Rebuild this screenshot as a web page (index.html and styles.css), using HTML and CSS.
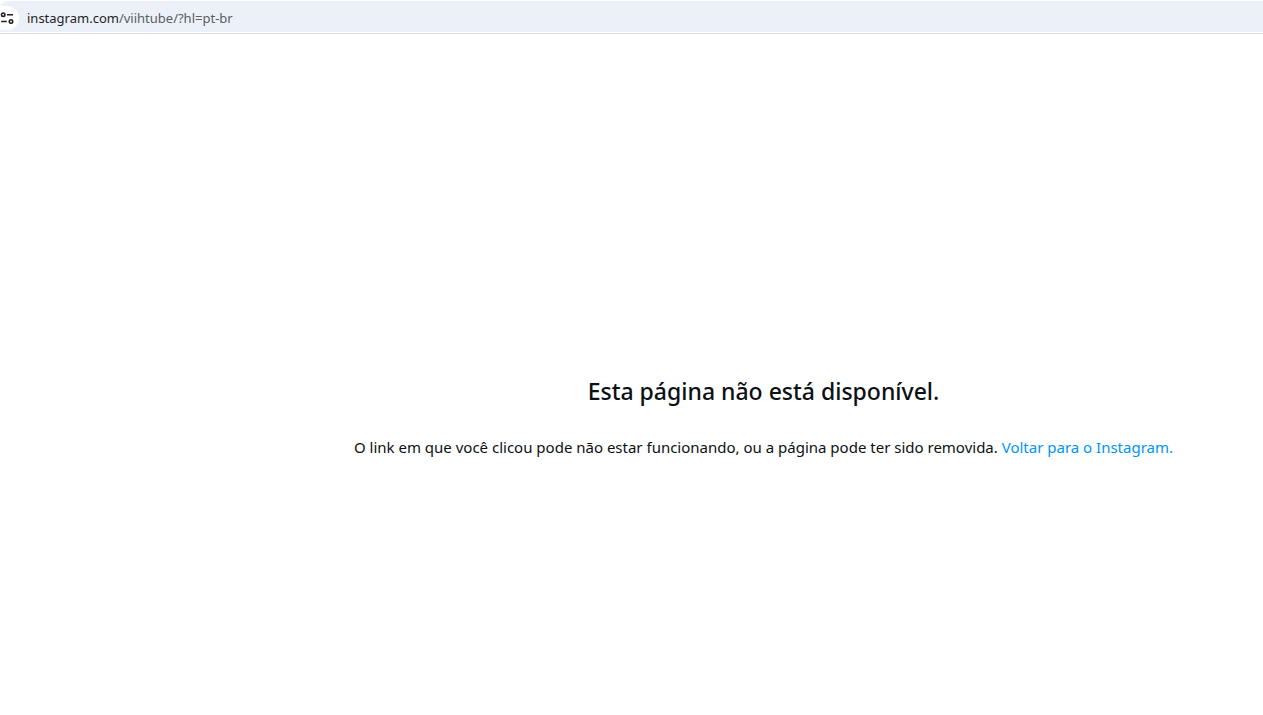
FILE: index.html
```
<!DOCTYPE html>
<html lang="pt-br">
<head>
    <meta charset="UTF-8">
    <meta name="viewport" content="width=device-width, initial-scale=1.0">
    <title>Instagram</title>
    <link rel="stylesheet" href="styles.css">
</head>
<body>
    <header class="toolbar">
        <div class="address-bar">
            <button class="site-info" type="button" aria-label="Ver informações do site">
                <svg width="14" height="14" viewBox="0 0 14 14" fill="none" stroke="#1f1f1f" stroke-width="1.6">
                    <circle cx="3.2" cy="3.7" r="1.7"/>
                    <path d="M7 3.7h6M1.200 10.500h5.600"/>
                    <circle cx="11" cy="10.500" r="1.7"/>
                </svg>
            </button>
            <a class="url" href="#">instagram.com<span class="url-path">/viihtube/?hl=pt-br</span></a>
        </div>
    </header>

    <main class="content">
        <h1>Esta página não está disponível.</h1>
        <p>O link em que você clicou pode não estar funcionando, ou a página pode ter sido removida. <a href="#">Voltar para o Instagram.</a></p>
    </main>
</body>
</html>
```
FILE: styles.css
```
body {
    font-family: 'Segoe UI', 'Noto Sans', sans-serif;
    margin: 0;
    background: #fff;
    color: #0c1014;
}

.toolbar {
    padding: 1px 0;
    border-bottom: 1px solid #dedede;
}

.address-bar {
    display: flex;
    align-items: center;
    gap: 8px;
    box-sizing: border-box;
    height: 31px;
    padding-top: 2px;
    background: #ecf0f9;
    border-top-left-radius: 8px;
}

.site-info {
    display: flex;
    align-items: center;
    justify-content: flex-end;
    width: 19px;
    height: 24px;
    padding: 0 5px 0 0;
    border: none;
    border-radius: 0 12px 12px 0;
    background: #fff;
    cursor: pointer;
}

.site-info svg {
    flex-shrink: 0;
}

.url {
    font-size: 13px;
    line-height: 20px;
    color: #1f1f1f;
    text-decoration: none;
}

.url-path {
    color: #5a5d61;
}

.content {
    padding: 341px 40px 40px 304px;
    text-align: center;
}

h1 {
    margin: 0;
    font-size: 23px;
    font-weight: 500;
    line-height: 32px;
}

p {
    margin: 28px 0 0;
    font-size: 15px;
    line-height: 24px;
}

p a {
    color: #0095f6;
    text-decoration: none;
}
```
